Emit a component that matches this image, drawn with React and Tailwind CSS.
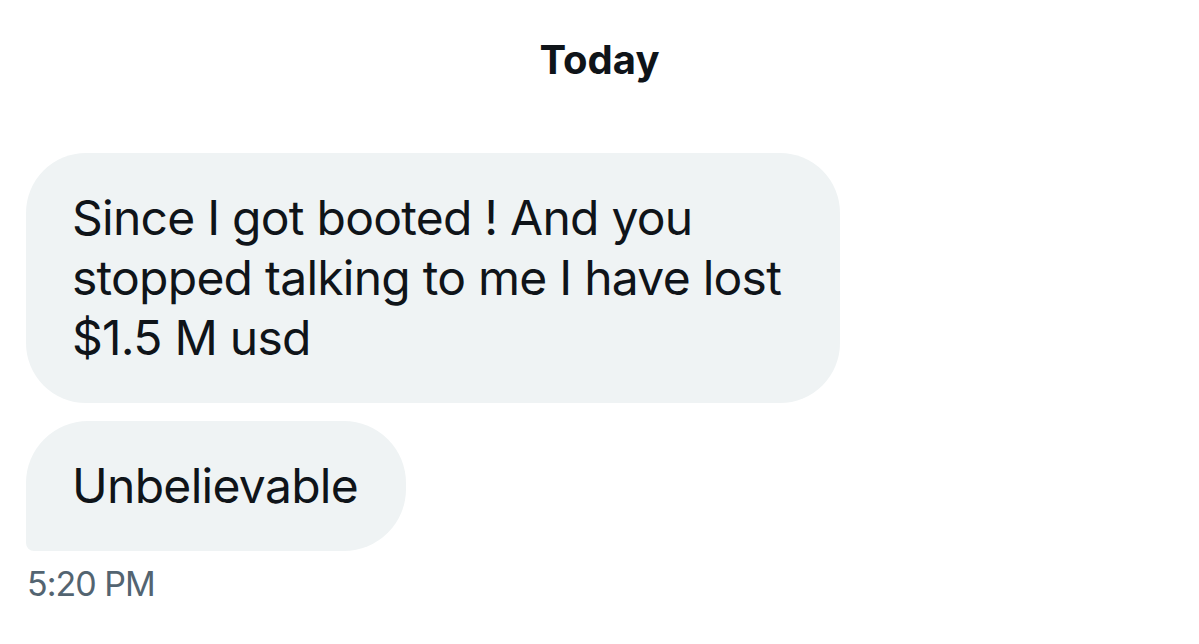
export default function App() {
  return (
    <div className="w-[1199px] h-[644px] bg-white overflow-hidden font-['Inter',sans-serif] text-[#0f1419]">
      <div className="pt-[38px] text-center text-[40px] leading-[44px] font-bold">Today</div>

      <div className="pl-[26px] pt-[71px] flex flex-col items-start">
        <div className="w-[814px] bg-[#eff3f4] rounded-[60px] pl-[46px] pr-[40px] py-[35px] text-[48px] leading-[60px] tracking-[-0.75px]">
          Since I got booted ! And you stopped talking to me I have lost $1.5 M usd
        </div>
        <div className="mt-[18px] bg-[#eff3f4] rounded-[62px] rounded-bl-[8px] pl-[46px] pr-[48px] py-[35px] text-[48px] leading-[60px] tracking-[-0.7px]">
          Unbelievable
        </div>
        <div className="mt-[11px] pl-[1px] text-[34px] leading-[44px] text-[#536471] tracking-[-1px]">5:20 PM</div>
      </div>
    </div>
  )
}
